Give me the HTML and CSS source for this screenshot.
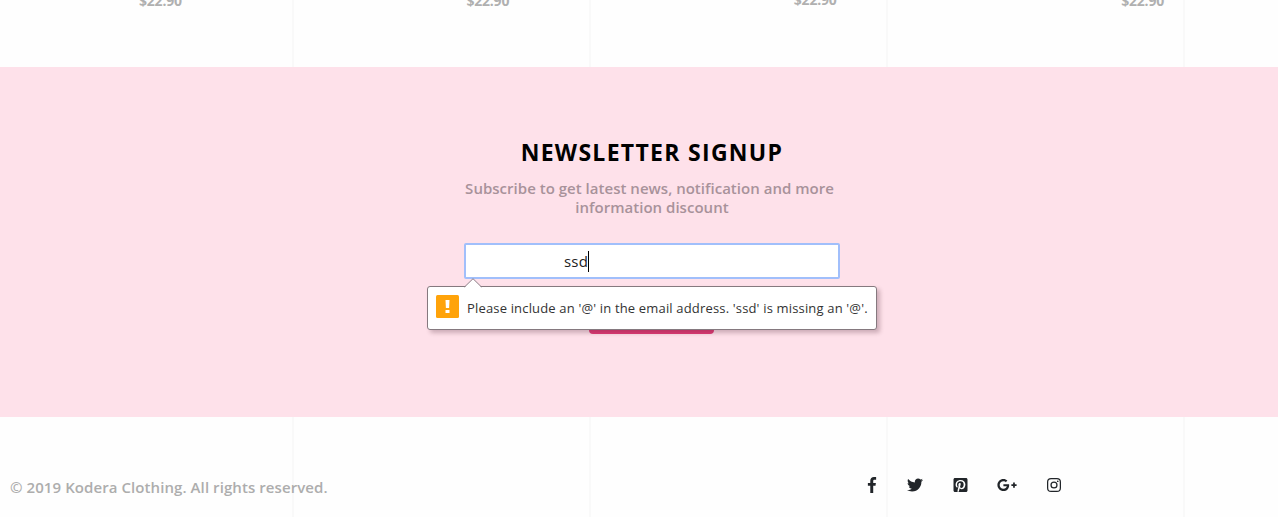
FILE: index.html
```html
<!DOCTYPE html>
<html lang="en">
<head>
<meta charset="utf-8">
<title>Kodera Clothing</title>
<link rel="stylesheet" href="styles.css">
</head>
<body>
<div class="page">
  <section class="prices">
    <span class="price">$22.90</span>
    <span class="price">$22.90</span>
    <span class="price price-raised">$22.90</span>
    <span class="price">$22.90</span>
  </section>
  <section class="newsletter">
    <div class="signup">
      <h2 class="title">NEWSLETTER SIGNUP</h2>
      <p class="lead"><span class="lead-first">Subscribe to get latest news, notification and more</span><br><span class="lead-second">information discount</span></p>
      <div class="field">
        <div class="input"><span class="value">ssd</span><span class="caret"></span></div>
        <div class="tooltip">
          <svg class="arrow" width="18" height="10" viewBox="0 0 18 10"><path d="M0 10 9 1l9 9" fill="#fff"/><path d="M.5 9 9 .7 17.500 9" fill="none" stroke="#8b8188"/></svg>
          <svg class="warn" width="23" height="23" viewBox="0 0 23 23"><rect width="23" height="23" rx="1.500" fill="#ffa30a"/><path d="M9.500 5h4l-.4 8h-3.200zM9.500 15h4v3h-4z" fill="#fff"/></svg>
          <span class="message">Please include an '@' in the email address. 'ssd' is missing an '@'.</span>
        </div>
      </div>
      <div class="button"></div>
    </div>
  </section>
  <footer class="footer">
    <span class="copyright">© 2019 Kodera Clothing. All rights reserved.</span>
    <nav class="social">
      <svg class="icon facebook" viewBox="0 0 264 512"><path d="M76.700 512V283H0v-91h76.700v-71.700C76.700 42.400 124.300 0 193.800 0c33.300 0 61.900 2.500 70.200 3.600V85h-48.200c-37.800 0-45.100 18-45.100 44.300V192H256l-11.700 91h-73.600v229"/></svg>
      <svg class="icon twitter" viewBox="0 0 512 512"><path d="M459.370 151.716c.325 4.548.325 9.097.325 13.645 0 138.720-105.583 298.558-298.558 298.558-59.452 0-114.680-17.219-161.137-47.106 8.447.974 16.568 1.299 25.340 1.299 49.055 0 94.213-16.568 130.274-44.832-46.132-.975-84.792-31.188-98.112-72.772 6.498.974 12.995 1.624 19.818 1.624 9.421 0 18.843-1.300 27.614-3.573-48.081-9.747-84.143-51.980-84.143-102.985v-1.299c13.969 7.797 30.214 12.670 47.431 13.319-28.264-18.843-46.781-51.005-46.781-87.391 0-19.492 5.197-37.360 14.294-52.954 51.655 63.675 129.300 105.258 216.365 109.807-1.624-7.797-2.599-15.918-2.599-24.040 0-57.828 46.782-104.934 104.934-104.934 30.213 0 57.502 12.670 76.670 33.137 23.715-4.548 46.456-13.320 66.599-25.340-7.798 24.366-24.366 44.833-46.132 57.827 21.117-2.273 41.584-8.122 60.426-16.243-14.292 20.791-32.161 39.308-52.628 54.253z"/></svg>
      <svg class="icon pinterest" viewBox="0 0 448 512"><path d="M448 80v352c0 26.500-21.500 48-48 48H154.400c9.800-16.400 22.400-40 27.400-59.300 3-11.500 15.300-58.400 15.300-58.400 8 15.300 31.400 28.200 56.300 28.200 74.100 0 127.400-68.100 127.400-152.700 0-81.100-66.200-141.800-151.400-141.800-106 0-162.200 71.100-162.200 148.600 0 36 19.200 80.800 49.800 95.100 4.700 2.200 7.100 1.200 8.200-3.300.8-3.400 5-20.100 6.800-27.800.6-2.500.3-4.600-1.700-7-10.100-12.300-18.300-34.900-18.300-56 0-54.200 41-106.600 110.900-106.600 60.300 0 102.600 41.100 102.600 99.900 0 66.400-33.500 112.400-77.200 112.400-24.100 0-42.100-19.900-36.400-44.400 6.900-29.200 20.300-60.700 20.300-81.800 0-53-75.500-45.700-75.500 25 0 21.700 7.300 36.500 7.300 36.500-31.400 132.800-36.100 134.500-29.600 192.600l2.200.8H48c-26.500 0-48-21.500-48-48V80c0-26.500 21.500-48 48-48h352c26.500 0 48 21.500 48 48z"/></svg>
      <svg class="icon gplus" viewBox="0 0 640 512"><path d="M386.061 228.496c1.834 9.692 3.143 19.384 3.143 31.956C389.204 370.205 315.599 448 204.800 448c-106.084 0-192-85.915-192-192s85.916-192 192-192c51.864 0 95.083 18.859 128.611 50.292l-52.126 50.030c-14.145-13.621-39.028-29.599-76.485-29.599-65.484 0-118.920 54.221-118.920 121.277 0 67.056 53.436 121.277 118.920 121.277 75.961 0 104.513-54.745 108.965-82.773H204.800v-66.009h181.261zm185.406 6.437V179.200h-56.001v55.733h-55.733v56.001h55.733v55.733h56.001v-55.733H627.200v-56.001h-55.733z"/></svg>
      <svg class="icon instagram" viewBox="0 0 14 14"><path fill-rule="evenodd" d="M4.100 0h5.800A4.100 4.100 0 0 1 14 4.100v5.800A4.100 4.100 0 0 1 9.900 14H4.100A4.100 4.100 0 0 1 0 9.900V4.100A4.100 4.100 0 0 1 4.100 0zm0 1.250A2.850 2.850 0 0 0 1.250 4.100v5.800a2.850 2.850 0 0 0 2.850 2.850h5.800a2.850 2.850 0 0 0 2.850-2.850V4.100A2.850 2.850 0 0 0 9.900 1.250zM7 3.400a3.600 3.600 0 1 1 0 7.200 3.600 3.600 0 0 1 0-7.200zm0 1.250a2.350 2.350 0 1 0 0 4.700 2.350 2.350 0 0 0 0-4.700zM10.750 2.400a.85.85 0 1 1 0 1.700.85.85 0 0 1 0-1.700z"/></svg>
    </nav>
  </footer>
</div>
</body>
</html>
```
FILE: styles.css
```css
* { box-sizing: border-box; }
body {
  margin: 0;
  font-family: "Open Sans", "Noto Sans", sans-serif;
  color: #212529;
}
.page {
  height: 517px;
  overflow: hidden;
  background: repeating-linear-gradient(to right, #fefefe 0 292px, #f9f9f9 292px 294px, #fefefe 294px 297px);
}
.prices {
  height: 67px;
  padding-left: 139px;
  display: grid;
  grid-template-columns: repeat(4, 327.400px);
}
.price {
  margin-top: -9px;
  font-size: 14px;
  line-height: 20px;
  font-weight: 700;
  letter-spacing: -.2px;
  color: #b0b0b0;
}
.price-raised { margin-top: -10px; }
.newsletter {
  height: 350px;
  padding: 68px 0 0 464px;
  background: #fee1ea;
}
.signup { width: 376px; }
.title {
  margin: 0;
  font-size: 23px;
  line-height: 34px;
  font-weight: 700;
  letter-spacing: 1.300px;
  color: #000;
  text-align: center;
  white-space: nowrap;
}
.lead {
  margin: 10px 0 0;
  font-size: 15px;
  line-height: 19px;
  font-weight: 600;
  letter-spacing: .02px;
  color: #a8929a;
  text-align: center;
  white-space: nowrap;
}
.lead-first { margin-right: 5px; }
.field {
  position: relative;
  margin-top: 26px;
}
.input {
  height: 36px;
  padding-left: 98px;
  display: flex;
  align-items: center;
  border: 2px solid #a1bffb;
  border-radius: 2px;
  background: #fff;
}
.value {
  font-size: 15px;
  line-height: 20px;
  letter-spacing: .2px;
  color: #222;
}
.caret {
  width: 1px;
  height: 21px;
  background: #000;
}
.tooltip {
  position: absolute;
  z-index: 1;
  top: 43px;
  left: -37px;
  width: 450px;
  height: 44px;
  padding: 0 8px;
  display: flex;
  align-items: center;
  gap: 8px;
  border: 1px solid #85797f;
  border-radius: 3px;
  background: #fff;
  box-shadow: 3px 3px 4px rgba(80, 40, 55, .28);
}
.warn { margin-top: -3px; flex: none; }
.arrow {
  position: absolute;
  top: -9px;
  left: 36px;
}
.message {
  font-size: 13px;
  line-height: 20px;
  letter-spacing: .165px;
  color: #333;
  white-space: nowrap;
}
.button {
  width: 125px;
  height: 38px;
  margin: 17px 0 0 125px;
  border-radius: 4px;
  background: #e23a75;
}
.footer {
  height: 100px;
  padding: 58px 0 0 10px;
  display: flex;
  align-items: flex-start;
}
.copyright {
  width: 856.500px;
  margin-top: 1px;
  font-size: 15px;
  line-height: 22px;
  font-weight: 600;
  letter-spacing: .08px;
  color: #adadad;
  white-space: nowrap;
}
.social {
  display: flex;
  align-items: center;
  height: 20px;
}
.icon {
  flex: none;
  height: 16px;
  fill: #212529;
}
.facebook { width: 10px; }
.twitter { width: 16px; margin-left: 30px; }
.pinterest { width: 15px; margin-left: 30px; }
.gplus { width: 20px; margin-left: 29px; }
.instagram { width: 14px; height: 14px; margin-left: 30px; }
```
